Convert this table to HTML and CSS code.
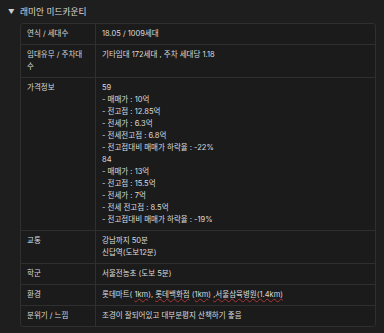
FILE: index.html
```html
<!DOCTYPE html>
<html lang="ko">
<head>
<meta charset="utf-8">
<link rel="stylesheet" href="styles.css">
</head>
<body>
<div class="page">
  <div class="heading"><span class="caret">▼</span><span class="title">래미안 미드카운티</span></div>
  <div class="table-wrap">
    <table class="info">
      <tr><td class="key">연식 / 세대수</td><td class="val">18.05 / 1009세대</td></tr>
      <tr><td class="key">임대유무 / 주차대수</td><td class="val">기타임대 172세대 , 주차 세대당 1.18</td></tr>
      <tr><td class="key">가격정보</td><td class="val">59<br>- 매매가 : 10억<br>- 전고점 : 12.85억<br>- 전세가 : 6.3억<br>- 전세전고점 : 6.8억<br>- 전고점대비 매매가 하락율 : -22%<br>84<br>- 매매가 : 13억<br>- 전고점 : 15.5억<br>- 전세가 : 7억<br>- 전세 전고점 : 8.5억<br>- 전고점대비 매매가 하락율 : -19%</td></tr>
      <tr><td class="key">교통</td><td class="val">강남까지 50분<br>신답역(도보12분)</td></tr>
      <tr><td class="key">학군</td><td class="val">서울전농초 (도보 5분)</td></tr>
      <tr><td class="key">환경</td><td class="val">롯데마트( <span class="spell">1km</span>), <span class="spell">롯데백화점</span> (<span class="spell">1km</span>) <span class="spell">,서울삼육병원(1.4km)</span></td></tr>
      <tr><td class="key">분위기 / 느낌</td><td class="val">조경이 잘되어있고 대부분평지 산책하기 좋음</td></tr>
    </table>
  </div>
</div>
</body>
</html>
```
FILE: styles.css
```css
html, body {
  margin: 0;
  padding: 0;
  background: #1e1e1e;
}
body {
  font-family: Inter, "Noto Sans CJK KR", sans-serif;
  color: #d8d8d8;
}
.page {
  width: 384px;
  height: 333px;
  overflow: hidden;
}
.heading {
  display: flex;
  align-items: center;
  height: 23px;
  padding-left: 8px;
  gap: 6px;
  font-size: 8.7px;
  color: #dcdcdc;
}
.caret {
  font-size: 6.5px;
  color: #d0d0d0;
  width: 6px;
}
.table-wrap {
  margin-left: 20px;
  width: 356px;
  border: 1px solid #2f2f2f;
  border-radius: 3px;
  overflow: hidden;
  background: #1b1b1b;
  box-sizing: border-box;
}
.info {
  width: 100%;
  border-collapse: collapse;
  font-size: 7.5px;
  line-height: 12px;
}
.info td {
  padding: 4px 6px;
  vertical-align: top;
  border-bottom: 1px solid #2f2f2f;
}
.info tr:last-child td {
  border-bottom: none;
}
.key {
  width: 62px;
  border-right: 1px solid #2f2f2f;
  color: #d8d8d8;
}
.val {
  color: #dcdcdc;
}
.spell {
  text-decoration: underline wavy #a83434;
  text-decoration-thickness: 1px;
  text-underline-offset: 1px;
}
```
